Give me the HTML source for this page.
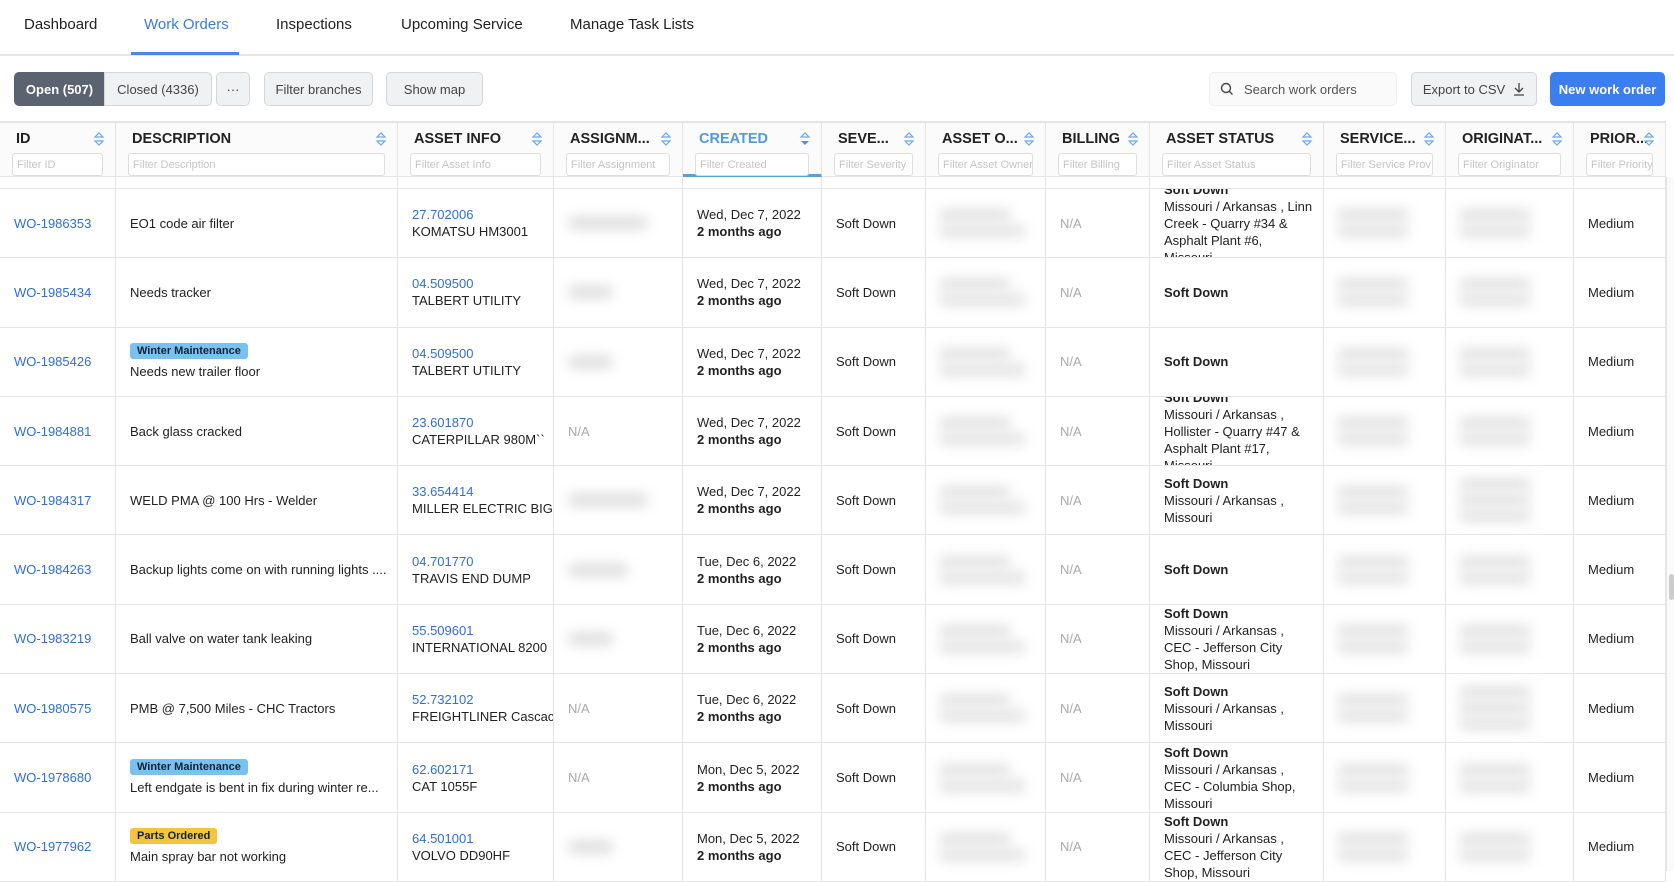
<!DOCTYPE html>
<html><head><meta charset="utf-8"><style>
*{box-sizing:border-box;margin:0;padding:0}
body{width:1674px;height:871px;overflow:hidden;background:#fff;font-family:"Liberation Sans",Arial,sans-serif;color:#222;font-size:13px;position:relative}
.nav{position:absolute;left:0;top:0;width:1674px;height:56px;border-bottom:2px solid #e6e6e6}
.nav span{position:absolute;top:16px;font-size:15px;color:#222}
.nav .act{color:#3b7be0}
.uline{position:absolute;left:131px;top:52px;width:108px;height:3px;background:#4a87e6}
.btn{position:absolute;top:72px;height:34px;border:1px solid #d4d6da;background:#f0f1f3;border-radius:5px;display:flex;align-items:center;justify-content:center;font-size:13px;color:#444}
.grid{position:absolute;left:0;top:121px;width:1666px;display:grid;grid-template-columns:116px 282px 156px 129px 139px 104px 120px 104px 174px 122px 128px 92px}
.h{height:56px;border-top:2px solid #e4e5e7;border-right:1px solid #e4e5e7;border-bottom:1px solid #e4e5e7;background:#fbfbfb;position:relative;padding:8px 12px 0 12px}
.h b{display:block;font-size:14.5px;color:#222;white-space:nowrap;margin-left:4px}
.h i{position:absolute;right:10px;top:8px;width:12px;height:16px}
.h input{display:block;margin-top:6px;width:100%;height:23px;border:1px solid #ddd;border-radius:3px;font-size:11px;padding-left:4px;color:#bbb;background:#fff;font-family:inherit}
.h input::placeholder{color:#c5c5c5}
.sp{height:12px;border-right:1px solid #e4e5e7;border-bottom:1px solid #e4e5e7}
.c{height:69.3px;border-right:1px solid #e4e5e7;border-bottom:1px solid #e4e5e7;display:flex;flex-direction:column;justify-content:center;overflow:hidden;padding:0 14px;font-size:13px;line-height:17px;white-space:nowrap}
.w{padding-right:2px}
.id{color:#2f6fd6}
.lk{color:#2f6fd6}
.na{color:#aaa}
.bl{width:80px;height:14px;background:#e0e0e0;filter:blur(6px);border-radius:6px}
.bl2{width:70px;height:12px;background:#e2e2e2;filter:blur(6px);margin:2px 0}
.tag{display:inline-block;font-size:11px;font-weight:bold;padding:1px 7px;border-radius:3px;color:#123;line-height:14px;margin-bottom:4px;align-self:flex-start}
.win{background:#79c1f0}.par{background:#f4c43c}
</style></head><body>
<div class="nav">
<span style="left:24px">Dashboard</span><span class="act" style="left:144px">Work Orders</span><span style="left:276px">Inspections</span><span style="left:401px">Upcoming Service</span><span style="left:570px">Manage Task Lists</span>
</div>
<div class="uline"></div>
<div class="btn" style="left:14px;width:91px;background:#5b6370;color:#fff;border-color:#5b6370;border-radius:5px 0 0 5px;font-weight:bold">Open (507)</div>
<div class="btn" style="left:104px;width:108px;border-radius:0 5px 5px 0">Closed (4336)</div>
<div class="btn" style="left:216px;width:34px">···</div>
<div class="btn" style="left:264px;width:109px">Filter branches</div>
<div class="btn" style="left:386px;width:97px">Show map</div>
<div class="btn" style="left:1209px;width:188px;background:#fafafa;border-color:#eee;justify-content:flex-start;padding-left:10px;color:#555">
<svg width="14" height="14" viewBox="0 0 14 14" style="margin-right:10px"><circle cx="6" cy="6" r="4.5" fill="none" stroke="#444" stroke-width="1.4"/><path d="M9.3 9.3L12.5 12.5" stroke="#444" stroke-width="1.4"/></svg>Search work orders</div>
<div class="btn" style="left:1411px;width:126px">Export to CSV <svg width="12" height="14" viewBox="0 0 12 14" style="margin-left:8px"><path d="M6 1v9M2 6l4 4 4-4M1 13h10" fill="none" stroke="#444" stroke-width="1.3"/></svg></div>
<div class="btn" style="left:1550px;width:115px;background:#3a7ef0;border-color:#3a7ef0;color:#fff;font-weight:bold">New work order</div>

<div class="grid">
<div class="h"><b>ID</b><i><svg width="12" height="16"><path d="M2 6l4-4 4 4zM2 10l4 4 4-4z" fill="none" stroke="#6aa9e6" stroke-width="1.2"/></svg></i><input placeholder="Filter ID"></div>
<div class="h"><b>DESCRIPTION</b><i><svg width="12" height="16"><path d="M2 6l4-4 4 4zM2 10l4 4 4-4z" fill="none" stroke="#6aa9e6" stroke-width="1.2"/></svg></i><input placeholder="Filter Description"></div>
<div class="h"><b>ASSET INFO</b><i><svg width="12" height="16"><path d="M2 6l4-4 4 4zM2 10l4 4 4-4z" fill="none" stroke="#6aa9e6" stroke-width="1.2"/></svg></i><input placeholder="Filter Asset Info"></div>
<div class="h"><b>ASSIGNM...</b><i><svg width="12" height="16"><path d="M2 6l4-4 4 4zM2 10l4 4 4-4z" fill="none" stroke="#6aa9e6" stroke-width="1.2"/></svg></i><input placeholder="Filter Assignment"></div>
<div class="h" style="border-bottom:3px solid #5a9fd8"><b style="color:#4f9ae0">CREATED</b><i><svg width="12" height="16"><path d="M2 6l4-4 4 4z" fill="none" stroke="#6aa9e6" stroke-width="1.2"/><path d="M2 10l4 4 4-4z" fill="#4f8fe0"/></svg></i><input placeholder="Filter Created"></div>
<div class="h"><b>SEVE...</b><i><svg width="12" height="16"><path d="M2 6l4-4 4 4zM2 10l4 4 4-4z" fill="none" stroke="#6aa9e6" stroke-width="1.2"/></svg></i><input placeholder="Filter Severity"></div>
<div class="h"><b>ASSET O...</b><i><svg width="12" height="16"><path d="M2 6l4-4 4 4zM2 10l4 4 4-4z" fill="none" stroke="#6aa9e6" stroke-width="1.2"/></svg></i><input placeholder="Filter Asset Owner"></div>
<div class="h"><b>BILLING</b><i><svg width="12" height="16"><path d="M2 6l4-4 4 4zM2 10l4 4 4-4z" fill="none" stroke="#6aa9e6" stroke-width="1.2"/></svg></i><input placeholder="Filter Billing"></div>
<div class="h"><b>ASSET STATUS</b><i><svg width="12" height="16"><path d="M2 6l4-4 4 4zM2 10l4 4 4-4z" fill="none" stroke="#6aa9e6" stroke-width="1.2"/></svg></i><input placeholder="Filter Asset Status"></div>
<div class="h"><b>SERVICE...</b><i><svg width="12" height="16"><path d="M2 6l4-4 4 4zM2 10l4 4 4-4z" fill="none" stroke="#6aa9e6" stroke-width="1.2"/></svg></i><input placeholder="Filter Service Prov"></div>
<div class="h"><b>ORIGINAT...</b><i><svg width="12" height="16"><path d="M2 6l4-4 4 4zM2 10l4 4 4-4z" fill="none" stroke="#6aa9e6" stroke-width="1.2"/></svg></i><input placeholder="Filter Originator"></div>
<div class="h"><b>PRIOR...</b><i><svg width="12" height="16"><path d="M2 6l4-4 4 4zM2 10l4 4 4-4z" fill="none" stroke="#6aa9e6" stroke-width="1.2"/></svg></i><input placeholder="Filter Priority"></div>
<div class="sp"></div><div class="sp"></div><div class="sp"></div><div class="sp"></div><div class="sp"></div><div class="sp"></div><div class="sp"></div><div class="sp"></div><div class="sp"></div><div class="sp"></div><div class="sp"></div><div class="sp"></div>

<div class="c id">WO-1986353</div><div class="c">EO1 code air filter</div><div class="c"><span class="lk">27.702006</span>KOMATSU HM3001</div><div class="c"><div class="bl"></div></div><div class="c">Wed, Dec 7, 2022<b>2 months ago</b></div><div class="c">Soft Down</div><div class="c"><div class="bl2"></div><div class="bl2" style="width:85px"></div></div><div class="c na">N/A</div><div class="c w"><b>Soft Down</b><span>Missouri / Arkansas , Linn<br>Creek - Quarry #34 &amp;<br>Asphalt Plant #6,<br>Missouri</span></div><div class="c"><div class="bl2"></div><div class="bl2"></div></div><div class="c"><div class="bl2"></div><div class="bl2"></div></div><div class="c">Medium</div>

<div class="c id">WO-1985434</div><div class="c">Needs tracker</div><div class="c"><span class="lk">04.509500</span>TALBERT UTILITY</div><div class="c"><div class="bl" style="width:45px"></div></div><div class="c">Wed, Dec 7, 2022<b>2 months ago</b></div><div class="c">Soft Down</div><div class="c"><div class="bl2"></div><div class="bl2" style="width:85px"></div></div><div class="c na">N/A</div><div class="c w"><b>Soft Down</b></div><div class="c"><div class="bl2"></div><div class="bl2"></div></div><div class="c"><div class="bl2"></div><div class="bl2"></div></div><div class="c">Medium</div>

<div class="c id">WO-1985426</div><div class="c"><span class="tag win">Winter Maintenance</span>Needs new trailer floor</div><div class="c"><span class="lk">04.509500</span>TALBERT UTILITY</div><div class="c"><div class="bl" style="width:45px"></div></div><div class="c">Wed, Dec 7, 2022<b>2 months ago</b></div><div class="c">Soft Down</div><div class="c"><div class="bl2"></div><div class="bl2" style="width:85px"></div></div><div class="c na">N/A</div><div class="c w"><b>Soft Down</b></div><div class="c"><div class="bl2"></div><div class="bl2"></div></div><div class="c"><div class="bl2"></div><div class="bl2"></div></div><div class="c">Medium</div>

<div class="c id">WO-1984881</div><div class="c">Back glass cracked</div><div class="c"><span class="lk">23.601870</span>CATERPILLAR 980M``</div><div class="c na">N/A</div><div class="c">Wed, Dec 7, 2022<b>2 months ago</b></div><div class="c">Soft Down</div><div class="c"><div class="bl2"></div><div class="bl2" style="width:85px"></div></div><div class="c na">N/A</div><div class="c w"><b>Soft Down</b><span>Missouri / Arkansas ,<br>Hollister - Quarry #47 &amp;<br>Asphalt Plant #17,<br>Missouri</span></div><div class="c"><div class="bl2"></div><div class="bl2"></div></div><div class="c"><div class="bl2"></div><div class="bl2"></div></div><div class="c">Medium</div>

<div class="c id">WO-1984317</div><div class="c">WELD PMA @ 100 Hrs - Welder</div><div class="c"><span class="lk">33.654414</span>MILLER ELECTRIC BIG</div><div class="c"><div class="bl"></div></div><div class="c">Wed, Dec 7, 2022<b>2 months ago</b></div><div class="c">Soft Down</div><div class="c"><div class="bl2"></div><div class="bl2" style="width:85px"></div></div><div class="c na">N/A</div><div class="c w"><b>Soft Down</b><span>Missouri / Arkansas ,<br>Missouri</span></div><div class="c"><div class="bl2"></div><div class="bl2"></div></div><div class="c"><div class="bl2"></div><div class="bl2"></div><div class="bl2"></div></div><div class="c">Medium</div>

<div class="c id">WO-1984263</div><div class="c">Backup lights come on with running lights ....</div><div class="c"><span class="lk">04.701770</span>TRAVIS END DUMP</div><div class="c"><div class="bl" style="width:60px"></div></div><div class="c">Tue, Dec 6, 2022<b>2 months ago</b></div><div class="c">Soft Down</div><div class="c"><div class="bl2"></div><div class="bl2" style="width:85px"></div></div><div class="c na">N/A</div><div class="c w"><b>Soft Down</b></div><div class="c"><div class="bl2"></div><div class="bl2"></div></div><div class="c"><div class="bl2"></div><div class="bl2"></div></div><div class="c">Medium</div>

<div class="c id">WO-1983219</div><div class="c">Ball valve on water tank leaking</div><div class="c"><span class="lk">55.509601</span>INTERNATIONAL 8200</div><div class="c"><div class="bl" style="width:45px"></div></div><div class="c">Tue, Dec 6, 2022<b>2 months ago</b></div><div class="c">Soft Down</div><div class="c"><div class="bl2"></div><div class="bl2" style="width:85px"></div></div><div class="c na">N/A</div><div class="c w"><b>Soft Down</b><span>Missouri / Arkansas ,<br>CEC - Jefferson City<br>Shop, Missouri</span></div><div class="c"><div class="bl2"></div><div class="bl2"></div></div><div class="c"><div class="bl2"></div><div class="bl2"></div></div><div class="c">Medium</div>

<div class="c id">WO-1980575</div><div class="c">PMB @ 7,500 Miles - CHC Tractors</div><div class="c"><span class="lk">52.732102</span>FREIGHTLINER Cascac</div><div class="c na">N/A</div><div class="c">Tue, Dec 6, 2022<b>2 months ago</b></div><div class="c">Soft Down</div><div class="c"><div class="bl2"></div><div class="bl2" style="width:85px"></div></div><div class="c na">N/A</div><div class="c w"><b>Soft Down</b><span>Missouri / Arkansas ,<br>Missouri</span></div><div class="c"><div class="bl2"></div><div class="bl2"></div></div><div class="c"><div class="bl2"></div><div class="bl2"></div><div class="bl2"></div></div><div class="c">Medium</div>

<div class="c id">WO-1978680</div><div class="c"><span class="tag win">Winter Maintenance</span>Left endgate is bent in fix during winter re...</div><div class="c"><span class="lk">62.602171</span>CAT 1055F</div><div class="c na">N/A</div><div class="c">Mon, Dec 5, 2022<b>2 months ago</b></div><div class="c">Soft Down</div><div class="c"><div class="bl2"></div><div class="bl2" style="width:85px"></div></div><div class="c na">N/A</div><div class="c w"><b>Soft Down</b><span>Missouri / Arkansas ,<br>CEC - Columbia Shop,<br>Missouri</span></div><div class="c"><div class="bl2"></div><div class="bl2"></div></div><div class="c"><div class="bl2"></div><div class="bl2"></div></div><div class="c">Medium</div>

<div class="c id">WO-1977962</div><div class="c"><span class="tag par">Parts Ordered</span>Main spray bar not working</div><div class="c"><span class="lk">64.501001</span>VOLVO DD90HF</div><div class="c"><div class="bl" style="width:45px"></div></div><div class="c">Mon, Dec 5, 2022<b>2 months ago</b></div><div class="c">Soft Down</div><div class="c"><div class="bl2"></div><div class="bl2" style="width:85px"></div></div><div class="c na">N/A</div><div class="c w"><b>Soft Down</b><span>Missouri / Arkansas ,<br>CEC - Jefferson City<br>Shop, Missouri</span></div><div class="c"><div class="bl2"></div><div class="bl2"></div></div><div class="c"><div class="bl2"></div><div class="bl2"></div></div><div class="c">Medium</div>
</div>
<div style="position:absolute;left:1666px;top:177px;width:8px;height:694px;background:#fafafa;border-left:1px solid #e4e5e7"></div>
<div style="position:absolute;left:1669px;top:574px;width:5px;height:26px;background:#ccc;border-radius:3px"></div>
</body></html>
